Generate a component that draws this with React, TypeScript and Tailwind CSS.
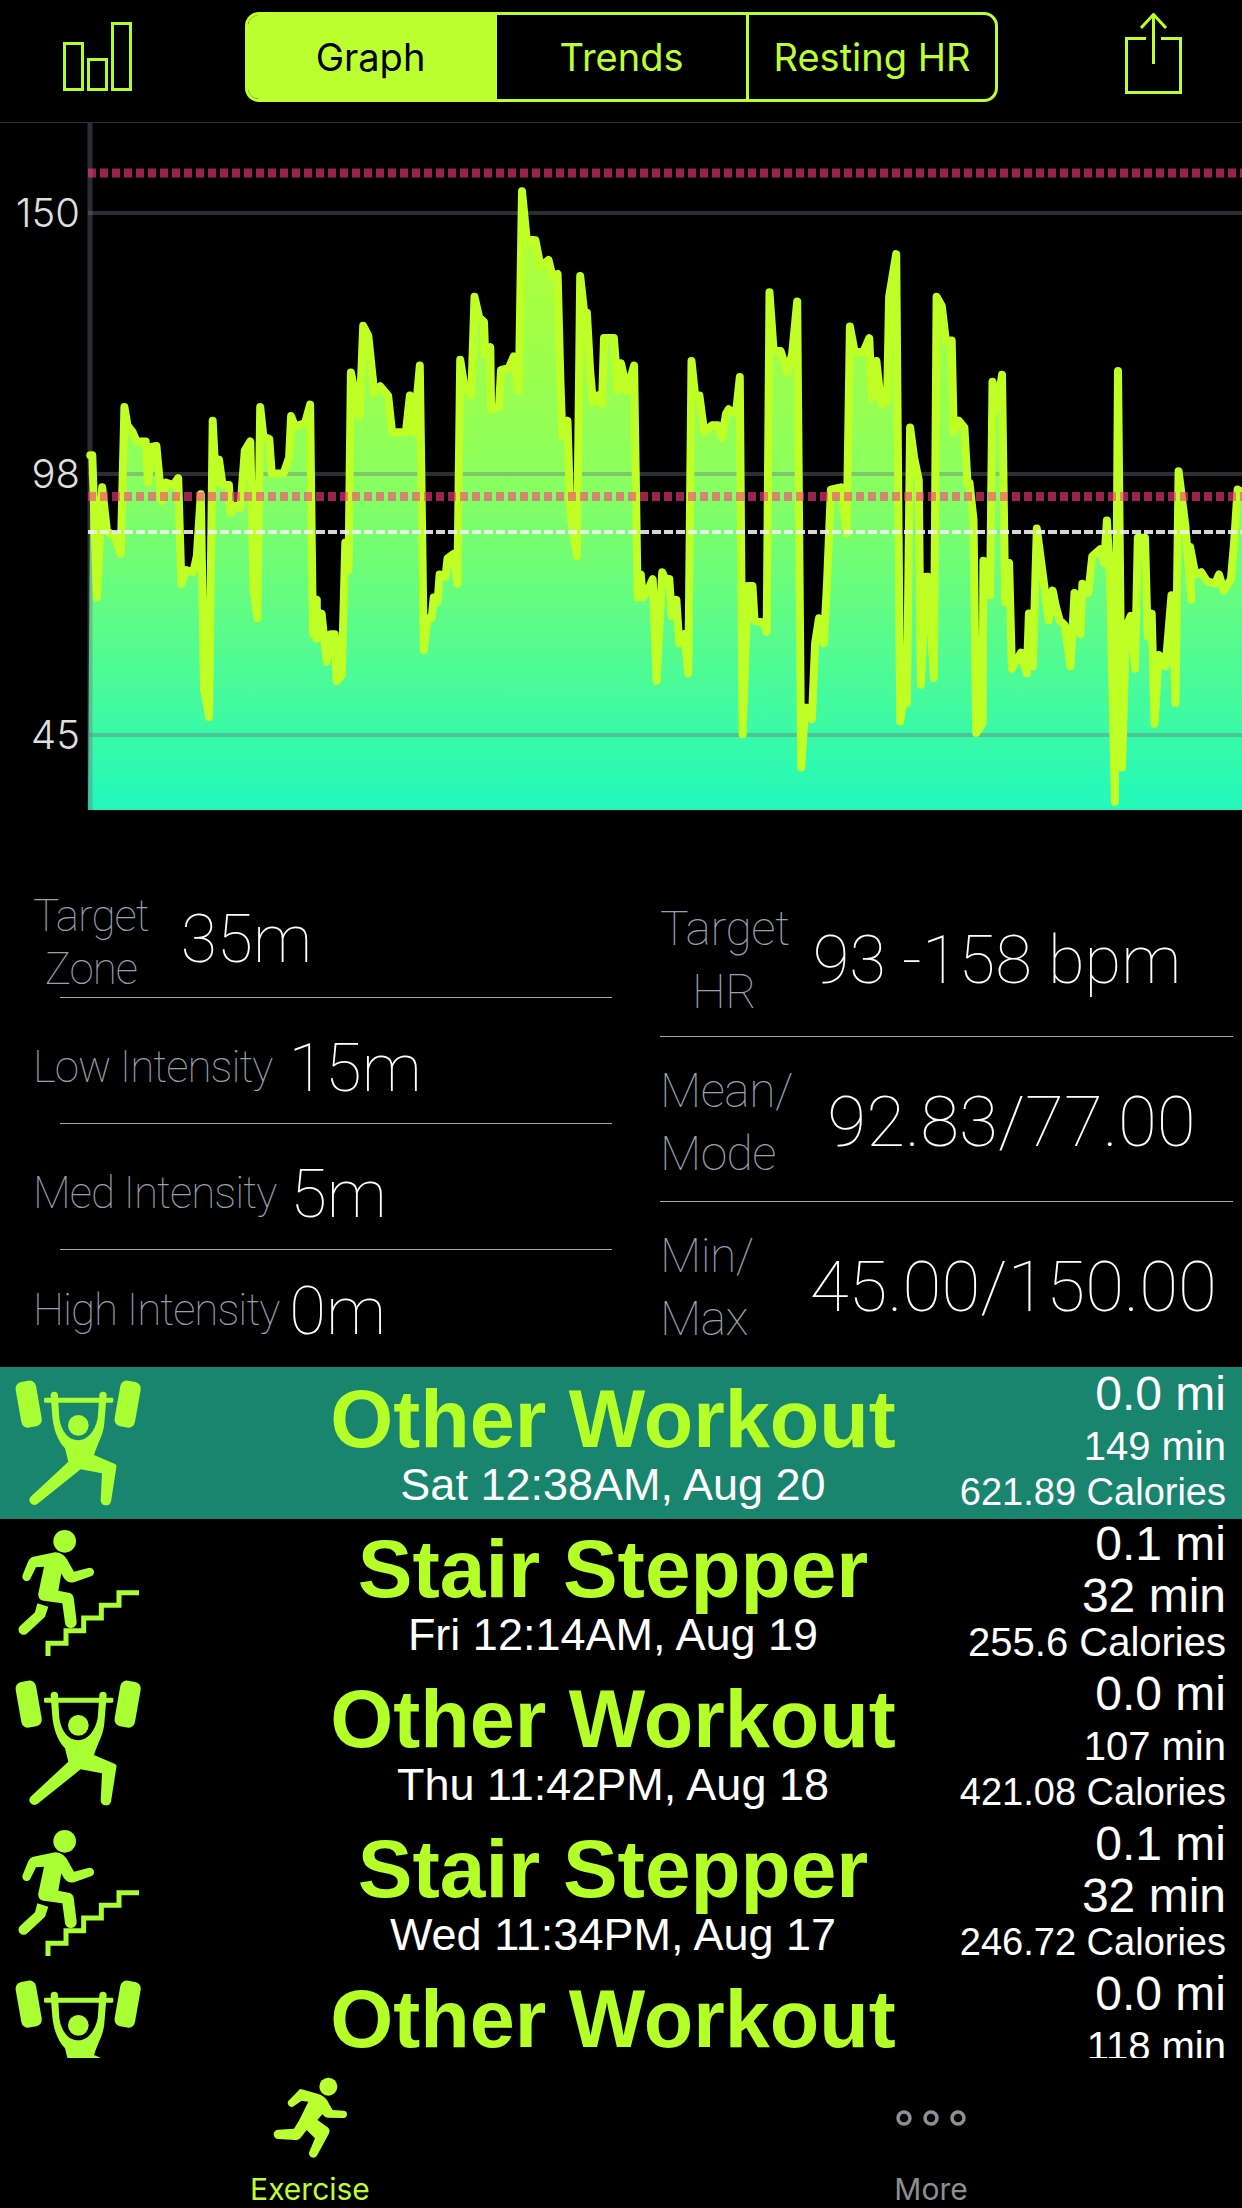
import React from "react";

const leftPts: number[][] = [[228,730],[233,730],[245,1040],[258,800],[270,895],[290,908],[305,945],[314,625],[322,665],[335,680],[345,700],[368,700],[374,790],[382,712],[395,710],[408,830],[420,790],[438,795],[450,780],[458,1010],[470,980],[488,985],[497,950],[507,815],[515,1240],[528,1300],[537,655],[545,790],[553,740],[562,795],[578,795],[582,855],[595,840],[607,845],[618,720],[632,700],[640,1020],[650,1085],[657,625],[665,690],[680,695],[686,770],[716,770],[730,735],[735,645],[745,668],[770,660],[783,620],[790,1120],[800,1045],[800,1130],[812,1075],[825,1180],[835,1120],[845,1120],[850,1222],[863,1210],[872,920],[880,980],[886,550],[895,590],[908,645],[917,448],[930,470],[945,595],[960,580],[980,600],[990,680],[1025,680],[1035,600],[1045,680],[1060,535],[1070,1155],[1080,1085],[1090,1085],[1095,1040],[1105,1050],[1110,990],[1125,995],[1130,955],[1145,945],[1155,1010],[1162,522],[1172,578],[1190,600],[1198,385],[1210,430],[1222,440],[1225,510],[1238,495],[1240,630],[1260,625],[1265,545],[1285,540],[1297,515],[1310,590],[1318,155],[1330,260],[1352,262],[1365,320],[1385,305],[1395,340],[1408,335],[1415,570],[1420,690],[1433,655],[1440,860],[1457,950],[1465,340],[1475,420],[1482,420],[1490,545],[1497,615],[1510,600],[1520,620],[1525,475],[1550,475],[1560,590]];
const rightPts: number[][] = [[0,530],[15,590],[33,535],[42,1040],[50,990],[55,1040],[70,1020],[80,1000],[90,1222],[104,985],[112,1000],[122,1000],[128,1080],[140,1045],[147,1140],[160,1120],[170,1205],[178,525],[187,600],[198,600],[210,680],[230,665],[245,665],[255,692],[265,640],[272,630],[290,640],[300,560],[307,1338],[320,1015],[332,1015],[337,1090],[360,1095],[368,1115],[375,375],[385,500],[403,503],[420,550],[432,510],[445,395],[455,1410],[465,1280],[472,1280],[482,1305],[490,1140],[500,1085],[512,1140],[520,1015],[530,805],[555,800],[570,900],[578,450],[590,505],[612,505],[627,475],[633,605],[645,525],[657,620],[672,610],[677,385],[695,292],[705,1310],[712,1270],[722,1270],[730,670],[740,735],[752,785],[757,1230],[770,995],[775,995],[790,1215],[797,385],[810,405],[820,480],[835,480],[840,680],[853,655],[867,670],[875,790],[880,790],[890,870],[897,1335],[913,1315],[915,960],[932,1035],[938,570],[950,630],[962,555],[970,1050],[980,965],[987,1195],[1010,1160],[1025,1205],[1030,1075],[1040,1190],[1050,890],[1065,990],[1080,1090],[1090,1025],[1098,1060],[1108,1090],[1120,1100],[1135,1190],[1145,1030],[1160,1120],[1165,1010],[1180,1030],[1190,950],[1210,935],[1220,965],[1227,872],[1235,1000],[1247,1485],[1255,547],[1265,1410],[1275,1105],[1287,1080],[1298,1195],[1305,910],[1323,910],[1330,1125],[1340,1075],[1347,1315],[1358,1165],[1375,1190],[1390,1035],[1400,1270],[1408,765],[1425,885],[1440,1045],[1437,930],[1450,990],[1465,985],[1480,1005],[1500,1010],[1510,990],[1522,1025],[1540,1000],[1548,920],[1557,805],[1568,810]];

const toPx = (p: number[], off: number) => `${(off + p[0] / 2.525).toFixed(1)},${(120 + p[1] / 2.178).toFixed(1)}`;
const linePts = [...leftPts.map((p) => toPx(p, 0)), ...rightPts.map((p) => toPx(p, 621))].join(" ");
const fillPts = `88,810 ${linePts} 1242,810`;

function Chart() {
  return (
    <div className="relative h-[749px] w-full">
      <svg width="1242" height="749" viewBox="0 123 1242 749" className="block">
        <defs>
          <linearGradient id="hrFill" gradientUnits="userSpaceOnUse" x1="0" y1="190" x2="0" y2="810">
            <stop offset="0" stopColor="#B6FF30" />
            <stop offset="0.45" stopColor="#8CFF5C" />
            <stop offset="1" stopColor="#22F8BC" />
          </linearGradient>
        </defs>
        <polygon points={fillPts} fill="url(#hrFill)" />
        <g stroke="#6e7380" strokeOpacity="0.4">
          <line x1="88" x2="1242" y1="213" y2="213" strokeWidth="4" />
          <line x1="88" x2="1242" y1="474" y2="474" strokeWidth="4" />
          <line x1="88" x2="1242" y1="735" y2="735" strokeWidth="4" />
          <line x1="90" x2="90" y1="123" y2="810" strokeWidth="5" />
        </g>
        <polyline points={linePts} fill="none" stroke="#BFFF26" strokeWidth="8" strokeLinejoin="round" strokeLinecap="round" />
        <line x1="88" x2="1242" y1="173" y2="173" stroke="#FF3A82" strokeOpacity="0.6" strokeWidth="9" strokeDasharray="8 4" />
        <line x1="88" x2="1242" y1="496.5" y2="496.5" stroke="#FF3A82" strokeOpacity="0.6" strokeWidth="9" strokeDasharray="8 4" />
        <line x1="88" x2="1242" y1="532" y2="532" stroke="#F0F0F0" strokeOpacity="0.9" strokeWidth="4" strokeDasharray="9 3" />
      </svg>
      <span className="absolute right-[1162px] top-[67px] text-[40px] leading-[46px] font-light text-[#dedede] font-['Inter',sans-serif]">150</span>
      <span className="absolute right-[1162px] top-[328px] text-[40px] leading-[46px] font-light text-[#dedede] font-['Inter',sans-serif]">98</span>
      <span className="absolute right-[1162px] top-[589px] text-[40px] leading-[46px] font-light text-[#dedede] font-['Inter',sans-serif]">45</span>
    </div>
  );
}

function BarsIcon() {
  return (
    <svg width="70" height="70" viewBox="0 0 70 70" className="block">
      <g fill="none" stroke="#AEFF2A" strokeWidth="3">
        <rect x="1.5" y="21.5" width="18" height="46" />
        <rect x="25.5" y="37.5" width="18" height="30" />
        <rect x="49.5" y="1.5" width="18" height="66" />
      </g>
    </svg>
  );
}

function ShareIcon() {
  return (
    <svg width="58" height="82" viewBox="0 0 58 82" className="block">
      <g fill="none" stroke="#BCFF30" strokeWidth="3">
        <path d="M21 25.5 H1.5 V79.5 H55.5 V25.5 H36" />
        <path d="M28.5 51 V1" />
        <path d="M16 15 L28.5 1.5 L41 15" />
      </g>
    </svg>
  );
}

function Header() {
  return (
    <div className="flex h-[123px] w-full border-b border-[#2c2e33]">
      <div className="ml-[63px] mt-[22px]"><BarsIcon /></div>
      <div className="ml-[112px] mt-[12px] flex h-[90px] w-[753px] overflow-hidden rounded-[14px] border-[3px] border-[#BCFF30] text-[38px] font-['Inter',sans-serif]">
        <div className="flex w-[249px] items-center justify-center bg-[#BCFF30] pr-[4px] text-black">Graph</div>
        <div className="flex w-[249px] items-center justify-center text-[#BCFF30]">Trends</div>
        <div className="flex flex-1 items-center justify-center border-l-[3px] border-[#BCFF30] text-[#BCFF30]">Resting HR</div>
      </div>
      <div className="ml-[127px] mt-[13px]"><ShareIcon /></div>
    </div>
  );
}

const thin = "font-['Roboto',sans-serif] font-thin";
const labelLeft = `${thin} text-center text-[44px] leading-[53px] tracking-[-1px] text-[#98a0b0] whitespace-nowrap`;
const labelRight = `${thin} text-[48px] leading-[63px] tracking-[-0.5px] text-[#98a0b0]`;

function Stats() {
  return (
    <div className="flex h-[495px] w-full">
      <div className="w-[621px]">
        <div className="flex h-[125px] items-center gap-[32px] pl-[33px] pt-[16px]">
          <div className={labelLeft}>Target<br />Zone</div>
          <div className={`${thin} mb-[6px] text-[66px] leading-[80px] text-white`}>35m</div>
        </div>
        <div className="ml-[60px] mr-[9px] h-px bg-[#a9a9a9]" />
        <div className="flex h-[125px] items-center gap-[16px] pl-[33px] pt-[14px]">
          <div className={labelLeft}>Low Intensity</div>
          <div className={`${thin} text-[67px] leading-[80px] text-white`}>15m</div>
        </div>
        <div className="ml-[60px] mr-[9px] h-px bg-[#a9a9a9]" />
        <div className="flex h-[125px] items-center gap-[14px] pl-[33px] pt-[14px]">
          <div className={labelLeft}>Med Intensity</div>
          <div className={`${thin} text-[67px] leading-[80px] text-white`}>5m</div>
        </div>
        <div className="ml-[60px] mr-[9px] h-px bg-[#a9a9a9]" />
        <div className="flex h-[117px] items-center gap-[10px] pl-[33px] pt-[4px]">
          <div className={labelLeft}>High Intensity</div>
          <div className={`${thin} text-[67px] leading-[80px] text-white`}>0m</div>
        </div>
      </div>
      <div className="ml-[39px] w-[573px]">
        <div className="flex h-[164px] items-center pt-[12px]">
          <div className={`${labelRight} w-[128px] text-center`}>Target<br />HR</div>
          <div className={`${thin} flex-1 whitespace-nowrap pr-[27px] text-center text-[67px] leading-[80px] text-white`}>93 -158 bpm</div>
        </div>
        <div className="h-px bg-[#a9a9a9]" />
        <div className="flex h-[164px] items-center pt-[6px]">
          <div className={`${labelRight} w-[150px]`}>Mean/<br />Mode</div>
          <div className={`${thin} flex-1 whitespace-nowrap pr-[20px] text-center text-[71px] leading-[80px] text-white`}>92.83/77.00</div>
        </div>
        <div className="h-px bg-[#a9a9a9]" />
        <div className="flex h-[164px] items-center pt-[6px]">
          <div className={`${labelRight} w-[150px]`}>Min/<br />Max</div>
          <div className={`${thin} flex-1 whitespace-nowrap pr-[16px] text-center text-[71px] leading-[80px] text-white`}>45.00/150.00</div>
        </div>
      </div>
    </div>
  );
}

function Lifter() {
  return (
    <svg width="150" height="150" viewBox="0 21 450 450" className="block" fill="#A9FF33">
      <rect x="55" y="63" width="62" height="139" rx="20" transform="rotate(-10 86 132)" />
      <rect x="352" y="63" width="62" height="139" rx="20" transform="rotate(10 383 132)" />
      <rect x="132" y="113" width="208" height="15" rx="4" />
      <circle cx="235" cy="196" r="31" />
      <path d="M152 106 a11 11 0 0 1 22 0 L178 175 C184 215 205 241 235 241 C262 241 285 215 293 175 L298 106 a11 11 0 0 1 22 0 L313 190 C310 225 295 245 282 285 L345 312 a8 8 0 0 1 4 10 L333 425 a16 16 0 0 1 -31 -3 L306 340 L242 328 L112 432 a15 15 0 0 1 -20 -22 L205 305 L195 265 C170 240 160 200 157 170 Z" />
    </svg>
  );
}

function Stepper() {
  return (
    <svg width="150" height="150" viewBox="0 471 450 450" className="block" fill="#A9FF33">
      <circle cx="194" cy="544" r="34" />
      <path d="M100 590 L165 577 C185 577 197 590 205 605 L222 635 L265 624 a13 13 0 0 1 8 25 L222 667 C210 670 200 665 192 655 L184 640 L175 692 L205 698 C218 700 222 710 222 720 L230 785 a17 17 0 0 1 -35 3 L187 730 L130 722 C118 720 112 708 116 695 L132 620 L108 622 L92 655 a13 13 0 0 1 -24 -10 L84 605 C88 597 92 592 100 590 Z" />
      <path d="M112 730 L145 740 L135 770 L82 820 a15 15 0 0 1 -22 -22 L105 757 Z" />
      <polyline points="144,888 144,850 198,850 198,812 251,812 251,774 304,774 304,736 357,736 357,698 417,698" fill="none" stroke="#A9FF33" strokeWidth="15" />
    </svg>
  );
}

type Row = { kind: "o" | "s"; date: string; mi: string; min: string; cal: string; minSize: string; calSize: string };
const rows: Row[] = [
  { kind: "o", date: "Sat 12:38AM, Aug 20", mi: "0.0 mi", min: "149 min", cal: "621.89 Calories", minSize: "text-[40px]", calSize: "text-[38px]" },
  { kind: "s", date: "Fri 12:14AM, Aug 19", mi: "0.1 mi", min: "32 min", cal: "255.6 Calories", minSize: "text-[48px]", calSize: "text-[40px]" },
  { kind: "o", date: "Thu 11:42PM, Aug 18", mi: "0.0 mi", min: "107 min", cal: "421.08 Calories", minSize: "text-[40px]", calSize: "text-[38px]" },
  { kind: "s", date: "Wed 11:34PM, Aug 17", mi: "0.1 mi", min: "32 min", cal: "246.72 Calories", minSize: "text-[48px]", calSize: "text-[38px]" },
  { kind: "o", date: "", mi: "0.0 mi", min: "118 min", cal: "", minSize: "text-[40px]", calSize: "text-[38px]" },
];

function WorkoutRow({ r, active }: { r: Row; active: boolean }) {
  return (
    <div className={`flex h-[150px] font-['Liberation_Sans',sans-serif] ${active ? "bg-[#19856F] shadow-[0_2px_0_#19856F]" : ""}`}>
      <div className="w-[150px] shrink-0">{r.kind === "o" ? <Lifter /> : <Stepper />}</div>
      <div className="flex w-[926px] shrink-0 flex-col items-center text-center">
        <div className={`mt-[6px] h-[87px] font-bold leading-[92px] text-[#B5FF28] ${r.kind === "o" ? "text-[81px]" : "text-[82px]"}`}>{r.kind === "o" ? "Other Workout" : "Stair Stepper"}</div>
        {r.date && <div className="text-[45px] leading-[50px] text-white">{r.date}</div>}
      </div>
      <div className="flex w-[150px] shrink-0 flex-col items-end whitespace-nowrap text-white">
        <div className="h-[53px] text-[48px] leading-[53px]">{r.mi}</div>
        <div className={`h-[46px] leading-[52px] ${r.minSize}`}>{r.min}</div>
        {r.cal && <div className={`h-[48px] leading-[52px] ${r.calSize}`}>{r.cal}</div>}
      </div>
    </div>
  );
}

function Runner() {
  return (
    <svg width="100" height="100" viewBox="0 0 300 300" className="block" fill="#BCFF30">
      <circle cx="205" cy="50" r="27" />
      <path d="M125 58 L175 72 C190 78 200 85 206 100 L218 120 L250 122 a11 11 0 0 1 0 22 L205 143 C198 143 192 140 188 132 L172 150 L203 172 C210 178 210 186 206 192 L172 255 a13 13 0 0 1 -24 -10 L165 205 L140 180 L122 203 C118 208 112 210 105 210 L55 207 a14 14 0 0 1 0 -28 L102 176 L118 150 L145 95 L125 92 L103 107 a11 11 0 0 1 -16 -16 L115 62 C118 58 120 57 125 58 Z" />
    </svg>
  );
}

function TabBar() {
  return (
    <div className="flex h-[150px] w-full font-['Inter',sans-serif] text-[30px] leading-[36px]">
      <div className="flex w-[620px] flex-col items-center pt-[12px] text-[#BCFF30]">
        <Runner />
        <div className="mt-px">Exercise</div>
      </div>
      <div className="flex w-[622px] flex-col items-center pt-[20px] text-[#8e8e93]">
        <div className="flex h-[82px] items-center justify-center">
          <svg width="70" height="20" viewBox="0 0 70 20" className="mt-[-2px] block" fill="none" stroke="#8e8e93" strokeWidth="3.5">
            <circle cx="8" cy="10" r="6" />
            <circle cx="35" cy="10" r="6" />
            <circle cx="62" cy="10" r="6" />
          </svg>
        </div>
        <div className="mt-[11px]">More</div>
      </div>
    </div>
  );
}

export default function App() {
  return (
    <div className="h-[2208px] w-[1242px] overflow-hidden bg-black">
      <Header />
      <Chart />
      <Stats />
      <div className="h-[691px] overflow-hidden">
        {rows.map((r, i) => (
          <WorkoutRow key={i} r={r} active={i === 0} />
        ))}
      </div>
      <TabBar />
    </div>
  );
}
